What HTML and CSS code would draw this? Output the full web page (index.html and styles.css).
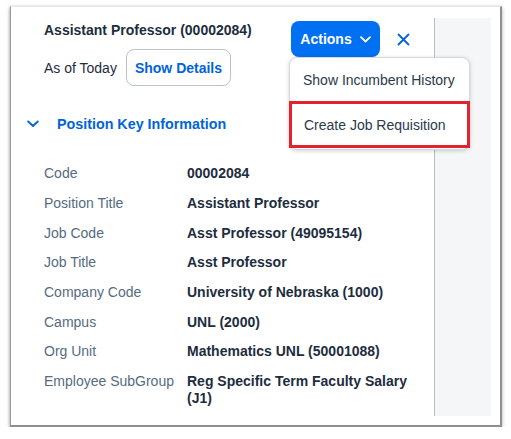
FILE: index.html
```html
<!DOCTYPE html>
<html>
<head>
<meta charset="utf-8">
<link rel="stylesheet" href="styles.css">
</head>
<body>
<div class="frame">
  <div class="panel">
    <div class="header">
      <div class="head-left">
        <div class="title">Assistant Professor (00002084)</div>
        <div class="asof">
          <span class="asof-text">As of Today</span>
          <button class="ghost-btn">Show Details</button>
        </div>
      </div>
      <div class="head-right">
        <button class="actions-btn">Actions
          <svg class="actions-chev" width="11" height="7" viewBox="0 0 11 7"><path d="M1 1.2 L5.5 5.5 L10 1.2" fill="none" stroke="#fff" stroke-width="1.8" stroke-linecap="round" stroke-linejoin="round"/></svg>
        </button>
        <button class="close-btn" aria-label="Close">
          <svg width="13" height="13" viewBox="0 0 13 13"><path d="M1.5 1.5 L11.5 11.5 M11.5 1.5 L1.5 11.5" stroke="#0064d9" stroke-width="1.8" stroke-linecap="round"/></svg>
        </button>
      </div>
    </div>

    <div class="section-head">
      <svg class="sec-chev" width="12" height="8" viewBox="0 0 12 8"><path d="M1.2 1.5 L6 6 L10.8 1.5" fill="none" stroke="#0064d9" stroke-width="1.9" stroke-linecap="round" stroke-linejoin="round"/></svg>
      <span class="sec-title">Position Key Information</span>
    </div>

    <div class="fields">
      <div class="label">Code</div><div class="value">00002084</div>
      <div class="label">Position Title</div><div class="value">Assistant Professor</div>
      <div class="label">Job Code</div><div class="value">Asst Professor (49095154)</div>
      <div class="label">Job Title</div><div class="value">Asst Professor</div>
      <div class="label">Company Code</div><div class="value">University of Nebraska (1000)</div>
      <div class="label">Campus</div><div class="value">UNL (2000)</div>
      <div class="label">Org Unit</div><div class="value">Mathematics UNL (50001088)</div>
      <div class="label">Employee SubGroup</div><div class="value">Reg Specific Term Faculty Salary (J1)</div>
    </div>

    <div class="menu">
      <div class="menu-item">Show Incumbent History</div>
      <div class="menu-item highlighted">Create Job Requisition</div>
    </div>
  </div>
  <div class="side"></div>
</div>
</body>
</html>
```
FILE: styles.css
```css
* { box-sizing: border-box; }
html, body {
  margin: 0;
  padding: 0;
  background: #ffffff;
}
body {
  font-family: "Liberation Sans", Arial, sans-serif;
  color: #1d2d3e;
}
.frame {
  margin: 6px 0 0 10px;
  width: 492px;
  height: 421px;
  background: #fff;
  border-top: 1px solid #e6e6e6;
  border-left: 1px solid #9a9a9a;
  border-right: 2px solid #8f8f8f;
  border-bottom: 2px solid #8f8f8f;
  box-shadow: 0 2px 4px rgba(0,0,0,0.28), -1px 0 2px rgba(0,0,0,0.12);
  padding: 11px 9px 9px 0;
  display: flex;
}
.panel {
  position: relative;
  width: 424px;
  height: 398px;
  border-right: 1px solid #b8bec6;
  background: #fff;
}
.side {
  width: 56px;
  height: 398px;
  background: #f5f6f7;
}
.header {
  display: flex;
  justify-content: space-between;
  padding: 3px 13px 0 33px;
}
.title {
  margin-top: 0;
  font-size: 14px;
  line-height: 18px;
  font-weight: bold;
  color: #1d2d3e;
}
.asof {
  margin-top: 10px;
  display: flex;
  align-items: center;
  gap: 9px;
}
.asof-text {
  font-size: 14px;
  color: #1d2d3e;
}
.ghost-btn {
  height: 37px;
  padding: 0 8px;
  border: 1px solid #bcc3ca;
  border-radius: 8px;
  background: #fff;
  color: #0064d9;
  font-family: "Liberation Sans", Arial, sans-serif;
  font-size: 14px;
  font-weight: bold;
}
.head-right {
  display: flex;
  align-items: flex-start;
  gap: 5px;
}
.actions-btn {
  height: 36px;
  width: 89px;
  border: none;
  border-radius: 8px;
  background: #0070f2;
  color: #fff;
  font-family: "Liberation Sans", Arial, sans-serif;
  font-size: 14px;
  font-weight: bold;
  display: flex;
  align-items: center;
  justify-content: center;
  gap: 8px;
  padding: 0;
}
.actions-chev { margin-top: 1px; }
.close-btn {
  width: 36px;
  height: 36px;
  border: none;
  background: transparent;
  display: flex;
  align-items: center;
  justify-content: center;
  padding: 0;
}
.section-head {
  margin-top: 23px;
  height: 30px;
  display: flex;
  align-items: center;
  padding-left: 16px;
}
.sec-chev { margin-right: 18px; }
.sec-title {
  font-size: 14.3px;
  font-weight: bold;
  color: #0064d9;
}
.fields {
  margin-top: 20px;
  display: grid;
  grid-template-columns: 143px 1fr;
  padding: 0 14px 0 33px;
  font-size: 14px;
  line-height: 17px;
}
.label, .value {
  padding: 6.35px 0;
}
.label { color: #556b82; }
.value { font-weight: bold; color: #1d2d3e; }

.menu {
  position: absolute;
  left: 278px;
  top: 39px;
  width: 181px;
  height: 93px;
  background: #fff;
  border: 1px solid #d5d9de;
  border-radius: 8px;
  box-shadow: 0 1px 4px rgba(0,0,0,0.18);
  display: flex;
  flex-direction: column;
}
.menu-item {
  height: 43px;
  display: flex;
  align-items: center;
  padding-left: 13px;
  font-size: 14px;
  color: #2a3a4b;
}
.menu-item.highlighted {
  height: 47px;
  margin: 0 -1px -1px -1px;
  padding-left: 12px;
  border: 3px solid #e3222b;
}
```
